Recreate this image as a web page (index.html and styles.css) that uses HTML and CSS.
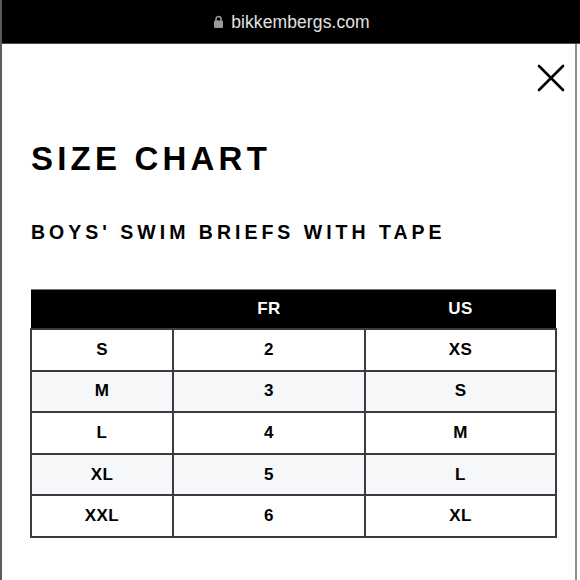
FILE: index.html
```html
<!DOCTYPE html>
<html lang="en">
<head>
<meta charset="utf-8">
<title>Size Chart</title>
<link rel="stylesheet" href="styles.css">
</head>
<body>
<div class="urlbar">
  <svg class="lock" width="9" height="13" viewBox="0 0 9 13" aria-hidden="true">
    <path d="M2 6 V4 A2.5 2.5 0 0 1 7 4 V6" fill="none" stroke="#9a9a9a" stroke-width="1.6"/>
    <rect x="0" y="5.5" width="9" height="7.5" rx="1.2" fill="#9a9a9a"/>
  </svg>
  <span class="domain">bikkembergs.com</span>
</div>
<div class="modal">
  <div class="close-row">
    <svg class="close" width="28" height="28" viewBox="0 0 28 28" aria-label="Close">
      <path d="M2 2 L26 26 M26 2 L2 26" stroke="#000" stroke-width="2.6" stroke-linecap="round"/>
    </svg>
  </div>
  <h1 class="title">SIZE CHART</h1>
  <h2 class="subtitle">BOYS' SWIM BRIEFS WITH TAPE</h2>
  <table class="chart">
    <thead>
      <tr><th class="c1"></th><th class="c2">FR</th><th class="c3">US</th></tr>
    </thead>
    <tbody>
      <tr><td>S</td><td>2</td><td>XS</td></tr>
      <tr class="alt"><td>M</td><td>3</td><td>S</td></tr>
      <tr><td>L</td><td>4</td><td>M</td></tr>
      <tr class="alt"><td>XL</td><td>5</td><td>L</td></tr>
      <tr><td>XXL</td><td>6</td><td>XL</td></tr>
    </tbody>
  </table>
</div>
</body>
</html>
```
FILE: styles.css
```css
html, body {
  margin: 0;
  padding: 0;
  background: #fff;
  width: 580px;
  height: 580px;
  overflow: hidden;
}
body {
  font-family: "Liberation Sans", Arial, sans-serif;
  border-left: 2px solid #5c5c5c;
  box-sizing: border-box;
}
.urlbar {
  height: 43px;
  background: #000;
  border-bottom: 1px solid #4a4a4a;
  display: flex;
  align-items: center;
  justify-content: center;
  gap: 8px;
  padding-left: 2px;
  box-sizing: content-box;
}
.lock {
  display: block;
  margin-top: 0;
}
.domain {
  color: #e2e2e2;
  font-size: 17.5px;
  letter-spacing: 0.1px;
  margin-top: 2px;
}
.modal {
  width: 575px;
  height: 540px;
  box-sizing: border-box;
  border-right: 2px solid #8c8c8c;
  padding: 20px 0 0 28px;
}
.close-row {
  display: flex;
  justify-content: flex-end;
  padding-right: 10px;
}
.close {
  display: block;
}
.title {
  margin: 47px 0 0 1px;
  font-size: 33px;
  font-weight: bold;
  letter-spacing: 4.2px;
  line-height: 40px;
  color: #000;
}
.subtitle {
  margin: 41px 0 0 1px;
  font-size: 19.5px;
  font-weight: bold;
  letter-spacing: 4px;
  line-height: 24px;
  color: #000;
}
.chart {
  margin-top: 45px;
  border-collapse: collapse;
  width: 525px;
  table-layout: fixed;
  font-size: 17px;
  font-weight: bold;
  letter-spacing: 0.4px;
}
.chart th {
  background: #000;
  color: #fff;
  height: 38px;
  padding: 0;
  border: none;
  border-top: 1px solid #777;
  font-weight: bold;
}
.chart .c1 { width: 142px; }
.chart .c2 { width: 192px; }
.chart .c3 { width: 191px; }
.chart td {
  height: 39.6px;
  padding: 0;
  text-align: center;
  border: 2px solid #3c3c40;
  color: #000;
}
.chart tr.alt td {
  background: #f6f7f9;
}
```
